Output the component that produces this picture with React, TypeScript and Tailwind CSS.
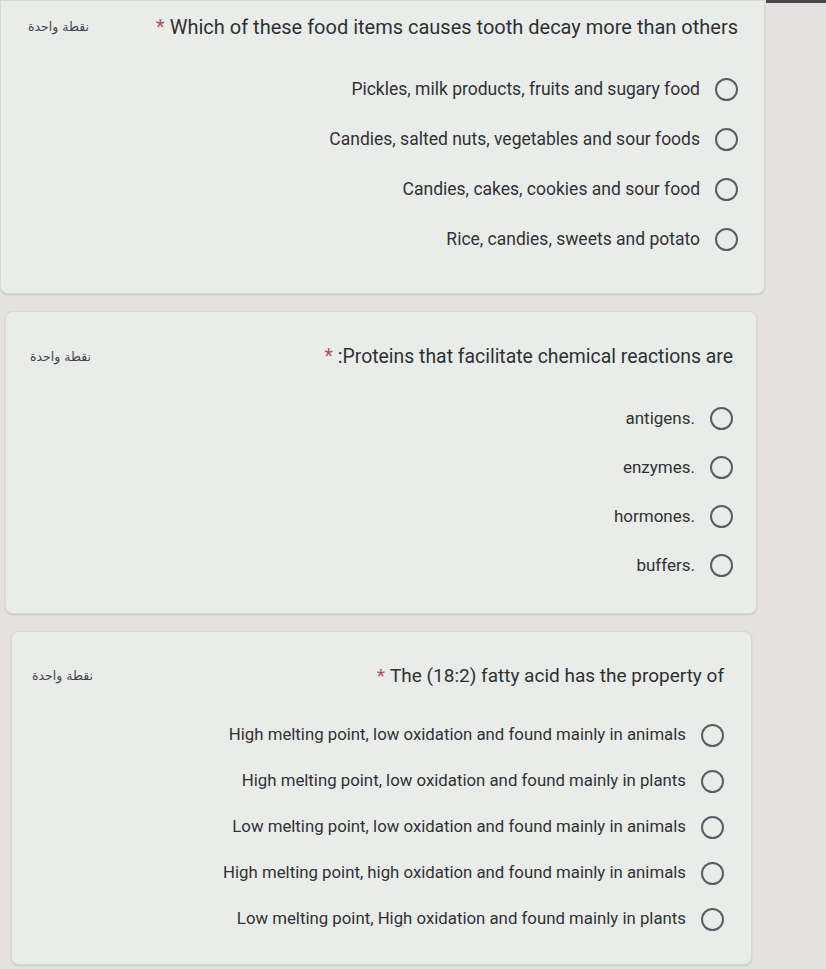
import React from 'react';

type Question = {
  title: string;
  options: string[];
  cardClass: string;
  titleText: string;
  listClass: string;
  rowClass: string;
  optionText: string;
};

const questions: Question[] = [
  {
    title: 'Which of these food items causes tooth decay more than others',
    options: [
      'Pickles, milk products, fruits and sugary food',
      'Candies, salted nuts, vegetables and sour foods',
      'Candies, cakes, cookies and sour food',
      'Rice, candies, sweets and potato',
    ],
    cardClass: 'ml-0 w-[765px] rounded-b-lg pt-[14px] pb-[29px] pr-[26px] pl-[27px]',
    titleText: 'text-[20px]',
    listClass: 'mt-[25px]',
    rowClass: 'h-[50px]',
    optionText: 'text-[17.5px]',
  },
  {
    title: ':Proteins that facilitate chemical reactions are',
    options: ['antigens.', 'enzymes.', 'hormones.', 'buffers.'],
    cardClass: 'ml-[5px] w-[752px] rounded-lg mt-[17px] pt-[33px] pb-[23px] pr-[23px] pl-[24px]',
    titleText: 'text-[19.4px]',
    listClass: 'mt-[25px]',
    rowClass: 'h-[49px]',
    optionText: 'text-[17px]',
  },
  {
    title: 'The (18:2) fatty acid has the property of',
    options: [
      'High melting point, low oxidation and found mainly in animals',
      'High melting point, low oxidation and found mainly in plants',
      'Low melting point, low oxidation and found mainly in animals',
      'High melting point, high oxidation and found mainly in animals',
      'Low melting point, High oxidation and found mainly in plants',
    ],
    cardClass: 'ml-[11px] w-[741px] rounded-lg mt-[17px] pt-[32px] pb-[22px] pr-[27px] pl-[20px]',
    titleText: 'text-[19px]',
    listClass: 'mt-[24px]',
    rowClass: 'h-[46px]',
    optionText: 'text-[16.8px]',
  },
];

function Radio() {
  return (
    <span className="block h-[23px] w-[23px] shrink-0 rounded-full border-2 border-[#5a5d61]" />
  );
}

function QuestionCard({ q }: { q: Question }) {
  return (
    <div
      className={`bg-[#eaecea] border border-[#d8d8d6] shadow-[0_1px_2px_rgba(0,0,0,0.12)] ${q.cardClass}`}
    >
      <div className="flex items-center justify-between h-[24px]">
        <span
          dir="rtl"
          className="text-[12.5px] text-[#44474c] font-['DejaVu_Sans',sans-serif]"
        >
          نقطة واحدة
        </span>
        <h2 className={`${q.titleText} leading-[24px] text-[#2e3134]`}>
          <span className="text-[#b1505e] mr-[5px]">*</span>
          {q.title}
        </h2>
      </div>
      <div className={`flex flex-col items-end ${q.listClass}`}>
        {q.options.map((opt) => (
          <label key={opt} className={`flex items-center gap-[15px] ${q.rowClass}`}>
            <span className={`${q.optionText} text-[#303235]`}>{opt}</span>
            <Radio />
          </label>
        ))}
      </div>
    </div>
  );
}

export default function App() {
  return (
    <div className="min-h-[969px] w-[826px] overflow-hidden bg-[#e6e1e1] font-['Roboto',sans-serif] relative">
      <div className="absolute right-0 top-0 h-[3px] w-[60px] bg-[#4a4a4a]" />
      {questions.map((q) => (
        <QuestionCard key={q.title} q={q} />
      ))}
    </div>
  );
}
